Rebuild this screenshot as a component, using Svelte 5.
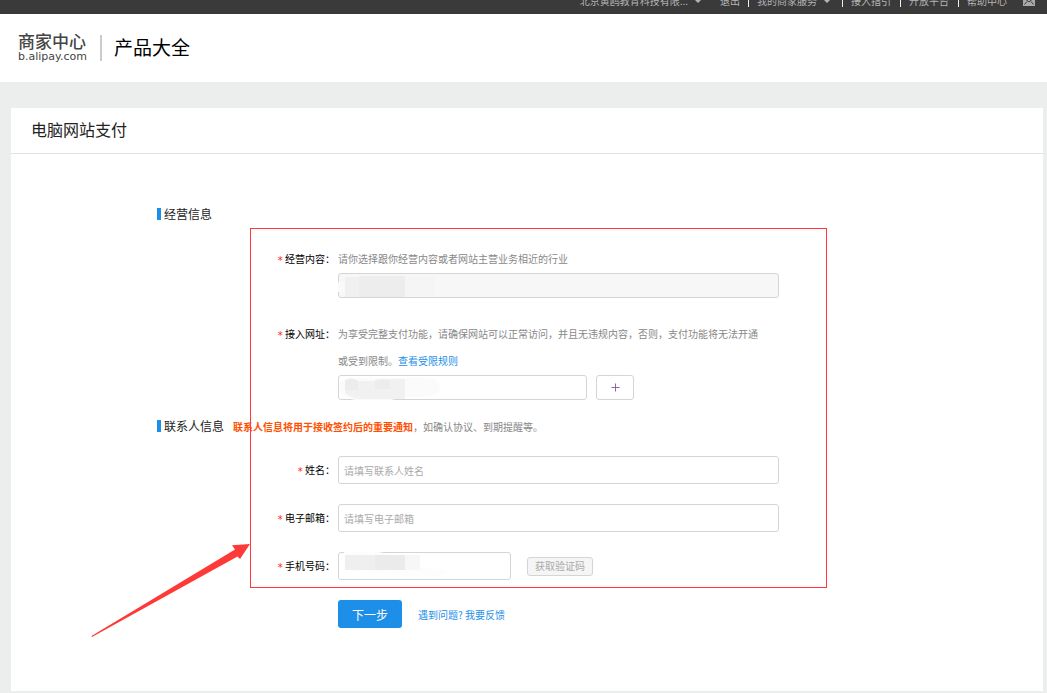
<script lang="ts">
  let siteUrl = $state('');
  let contactName = $state('');
  let email = $state('');
  let phone = $state('');

  const helpLinks = ['接入指引', '开放平台', '帮助中心'];
</script>

<div class="topbar">
  <nav class="topnav">
    <a class="account" href="#account">北京黄鸥教育科技有限...<i class="caret"></i></a>
    <a class="logout" href="#logout">退出</a>
    <a class="item" href="#services">我的商家服务<i class="caret"></i></a>
    {#each helpLinks as link}
      <a class="item" href="#help">{link}</a>
    {/each}
    <a class="mail" href="#mail" aria-label="消息">
      <svg viewBox="0 0 14 12" width="14" height="12">
        <rect x="1" y="1" width="12" height="10" fill="#aaa" />
        <path d="M1 2l6 5 6-5M2.500 9.500l2.500-3M11.500 9.500l-2.500-3" fill="none" stroke="#3a3a3a" />
      </svg>
    </a>
  </nav>
</div>

<header class="header">
  <a class="logo" href="#home">
    <span class="logo-name">商家中心</span>
    <span class="logo-domain">b.alipay.com</span>
  </a>
  <h1>产品大全</h1>
</header>

<main>
  <section class="card">
    <h2>电脑网站支付</h2>

    <form class="form" onsubmit={(e) => e.preventDefault()}>
      <div class="section-title">
        <h3>经营信息</h3>
      </div>

      <div class="row first">
        <label class="label" for="business"><em>*</em> 经营内容：</label>
        <div class="field">
          <p class="hint">请你选择跟你经营内容或者网站主营业务相近的行业</p>
          <div class="control">
            <input id="business" class="short" type="text" disabled />
            <svg class="smudge" width="110" height="28" viewBox="0 0 110 28">
              <path d="M0 9h8v10H0z" fill="#fafafa" />
              <path d="M7 4h14V3h46v21H7z" fill="#ededed" />
              <path d="M7 4h14v20H7z" fill="#f0f0f0" />
              <path d="M67 4h30v19H67z" fill="#f5f5f5" />
            </svg>
          </div>
        </div>
      </div>

      <div class="row second">
        <label class="label" for="site"><em>*</em> 接入网址：</label>
        <div class="field">
          <p class="hint">
            为享受完整支付功能，请确保网站可以正常访问，并且无违规内容，否则，支付功能将无法开通<br />
            或受到限制。<a href="#rules">查看受限规则</a>
          </p>
          <div class="control split">
            <input id="site" class="short site" type="text" bind:value={siteUrl} />
            <button class="add" type="button" aria-label="添加网址">
              <svg viewBox="0 0 9 9" width="9" height="9">
                <path d="M0.500 4.500h8" stroke="#8a6a94" />
                <path d="M4.500 0.500v8" stroke="#a25bb0" />
              </svg>
            </button>
            <svg class="smudge" width="110" height="28" viewBox="0 0 110 28">
              <path d="M1 12Q2 4 10 3h80q12 2 12 9t-12 10H67l-14 3H18Q3 24 1 12z" fill="#fbfbfb" />
              <path d="M7 6q6-5 13 0h16q6-3 12-2h19v20H24q-10 0-17-6z" fill="#f1f1f1" />
              <path d="M7 6q6-5 13 0v9H7zM37 5h15v9H37z" fill="#ececec" />
            </svg>
          </div>
        </div>
      </div>

      <div class="section-title contact">
        <h3>联系人信息</h3>
        <p class="notice"><strong>联系人信息将用于接收签约后的重要通知</strong>，如确认协议、到期提醒等。</p>
      </div>

      <div class="row">
        <label class="label tall" for="name"><em>*</em> 姓名：</label>
        <div class="field">
          <input id="name" type="text" placeholder="请填写联系人姓名" bind:value={contactName} />
        </div>
      </div>

      <div class="row">
        <label class="label tall" for="email"><em>*</em> 电子邮箱：</label>
        <div class="field">
          <input id="email" type="text" placeholder="请填写电子邮箱" bind:value={email} />
        </div>
      </div>

      <div class="row">
        <label class="label tall" for="phone"><em>*</em> 手机号码：</label>
        <div class="field control split">
          <input id="phone" class="phone" type="text" bind:value={phone} />
          <button class="code" type="button" disabled>获取验证码</button>
          <svg class="smudge" width="110" height="28" viewBox="0 0 110 28">
            <path d="M6 0q20-3 40 1l40 14 24 4q-4 6-12 5-30 1-52-3L6 18z" fill="#fdfdfd" />
            <path d="M7 3h60v15H7z" fill="#efefef" />
            <path d="M37 3h30v15H37z" fill="#ebebeb" />
            <path d="M67 3h15v15H67z" fill="#f7f7f7" />
          </svg>
        </div>
      </div>

      <div class="row actions">
        <div class="label"></div>
        <div class="field split">
          <button class="next" type="submit">下一步</button>
          <a class="feedback" href="#feedback">遇到问题? 我要反馈</a>
        </div>
      </div>

      <!-- markup drawn over the form -->
      <div class="highlight"></div>
      <svg class="arrow" width="162" height="96" viewBox="0 0 162 96">
        <path d="M1.500 94L145 7.500 142 3.200 160 2 150 17 147.500 14.500 2 95z" fill="#fd3a38" />
      </svg>
    </form>
  </section>
</main>

<style>
  :global(body) {
    background: #eceeed;
    color: #222;
    font-family: "Noto Sans CJK SC", sans-serif;
    font-size: 10px;
  }

  h1,
  h2,
  h3,
  p {
    margin: 0;
    font-weight: 400;
  }

  a {
    color: #1e8fe8;
    text-decoration: none;
  }

  input,
  button {
    box-sizing: border-box;
    font-family: inherit;
    font-size: 10px;
  }

  .topbar {
    height: 14px;
    overflow: hidden;
    background: #3a3a3a;
  }

  .topnav {
    display: flex;
    justify-content: flex-end;
    align-items: center;
    height: 20px;
    margin-top: -9px;
    padding-right: 11px;
  }

  .topnav a {
    display: flex;
    align-items: center;
    line-height: 12px;
    color: #b5b5b5;
    white-space: nowrap;
  }

  .account {
    margin-right: 16px;
  }

  .topnav .item {
    padding: 0 9px 0 8px;
    border-left: 1px solid #eee;
  }

  .logout {
    margin-right: 8px;
  }

  .caret {
    margin: 0 2px 0 6px;
    border: 4px solid transparent;
    border-top-color: #b5b5b5;
    border-bottom: 0;
  }

  .topnav .mail {
    margin-left: 6px;
  }

  .header {
    display: flex;
    align-items: center;
    height: 68px;
    padding: 0 18px;
    background: #fff;
  }

  .logo {
    display: flex;
    flex-direction: column;
    gap: 6px;
    padding-right: 13px;
    border-right: 2px solid #ccc;
    color: #444;
  }

  .logo-name {
    font-size: 17px;
    font-weight: 500;
    line-height: 12px;
  }

  .logo-domain {
    font-family: "DejaVu Sans", sans-serif;
    font-size: 11px;
    line-height: 8px;
  }

  h1 {
    margin-left: 12px;
    padding-bottom: 2px;
    font-size: 19px;
    line-height: 28px;
    color: #000;
  }

  main {
    padding: 26px 4px 2px 11px;
  }

  .card {
    background: #fff;
  }

  h2 {
    padding: 0 20px 2px;
    border-bottom: 1px solid #e2e2e2;
    font-size: 16px;
    line-height: 43px;
  }

  .form {
    position: relative;
    padding: 50px 20px 63px 146px;
  }

  .section-title {
    display: flex;
    align-items: center;
    height: 20px;
  }

  h3 {
    padding-left: 3px;
    border-left: 4px solid #1e8fe8;
    font-size: 12px;
    line-height: 12px;
  }

  .notice {
    margin-left: 9px;
    color: #888;
  }

  .notice strong {
    color: #ff5000;
  }

  .row {
    display: flex;
    margin-top: 20px;
  }

  .first {
    margin-top: 21px;
  }

  .second {
    margin-top: 22px;
  }

  .contact {
    margin-top: 16px;
  }

  .label {
    box-sizing: border-box;
    flex: none;
    width: 181px;
    padding-right: 3px;
    line-height: 27px;
    text-align: right;
    color: #000;
  }

  .tall {
    line-height: 28px;
  }

  .label em {
    font-family: "DejaVu Sans", sans-serif;
    font-style: normal;
    line-height: 10px;
    vertical-align: -1px;
    color: #f22;
  }

  .field {
    flex: 1;
    max-width: 441px;
  }

  .hint {
    margin-bottom: 1px;
    line-height: 27px;
    color: #888;
  }

  .control {
    position: relative;
  }

  .split {
    display: flex;
    align-items: center;
  }

  input {
    display: block;
    width: 100%;
    height: 28px;
    padding: 0 5px;
    border: 1px solid #d5d5d5;
    border-radius: 3px;
    background: #fff;
  }

  input::placeholder {
    color: #aaa;
  }

  input:disabled {
    background: #f7f7f7;
  }

  .short {
    height: 25px;
  }

  .site {
    width: 249px;
  }

  .phone {
    width: 173px;
  }

  .smudge {
    position: absolute;
    left: 0;
    top: 0;
    pointer-events: none;
  }

  .add {
    display: flex;
    align-items: center;
    justify-content: center;
    width: 38px;
    height: 25px;
    margin-left: 9px;
    border: 1px solid #d5d5d5;
    border-radius: 3px;
    background: #fff;
  }

  .code {
    height: 19px;
    margin-left: 16px;
    padding: 0 7px;
    border: 1px solid #d5d5d5;
    border-radius: 3px;
    background: #f5f5f5;
    line-height: 16px;
    color: #aaa;
  }

  .next {
    width: 64px;
    height: 28px;
    border: 0;
    border-radius: 3px;
    background: #1e8fe8;
    color: #fff;
    font-size: 12px;
  }

  .feedback {
    margin-left: 16px;
  }

  .highlight {
    position: absolute;
    left: 239px;
    top: 74px;
    box-sizing: border-box;
    width: 577px;
    height: 360px;
    border: 1px solid #fd3a38;
    pointer-events: none;
  }

  .arrow {
    position: absolute;
    left: 79px;
    top: 388px;
    pointer-events: none;
  }
</style>
